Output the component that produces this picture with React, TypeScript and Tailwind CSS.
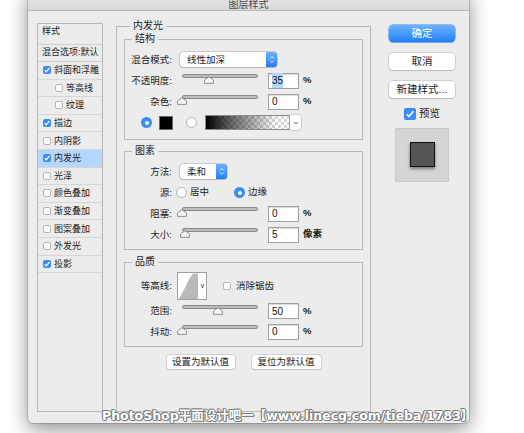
import React from 'react';

type Item = { label: string; on?: boolean; sub?: boolean; active?: boolean };

const items: Item[] = [
  { label: '斜面和浮雕', on: true },
  { label: '等高线', sub: true },
  { label: '纹理', sub: true },
  { label: '描边', on: true },
  { label: '内阴影' },
  { label: '内发光', on: true, active: true },
  { label: '光泽' },
  { label: '颜色叠加' },
  { label: '渐变叠加' },
  { label: '图案叠加' },
  { label: '外发光' },
  { label: '投影', on: true },
];

function Check({ on }: { on?: boolean }) {
  if (on) {
    return (
      <span className="flex h-[8px] w-[8px] shrink-0 items-center justify-center rounded-[2px] bg-[#3a8cf6]">
        <svg viewBox="0 0 8 8" className="h-[8px] w-[8px]">
          <path d="M1.7 4.1 3.3 5.8 6.4 2" fill="none" stroke="#fff" strokeWidth="1.2" />
        </svg>
      </span>
    );
  }
  return <span className="h-[8px] w-[8px] shrink-0 rounded-[2px] border border-[#b4b4b4] bg-white" />;
}

function Radio({ on }: { on?: boolean }) {
  if (on) {
    return (
      <span className="flex h-[11px] w-[11px] shrink-0 items-center justify-center rounded-full bg-[#3a8cf6]">
        <span className="h-[4px] w-[4px] rounded-full bg-white" />
      </span>
    );
  }
  return <span className="h-[11px] w-[11px] shrink-0 rounded-full border border-[#b0b0b0] bg-white" />;
}

function Label({ children }: { children: React.ReactNode }) {
  return <span className="w-[47px] shrink-0 text-right text-[9.5px] leading-[12px]">{children}</span>;
}

function Slider({ value }: { value: number }) {
  return (
    <div className="mb-[3px] ml-[5px] flex w-[86px] shrink-0 flex-col">
      <div className="mx-[5px] h-[4px] rounded-full border border-[#8a8a8a] bg-[#bcbcbc]" />
      <svg className="-mt-[2px] h-[8px] w-[10px]" style={{ marginLeft: value * 0.76 }} viewBox="0 0 10 8">
        <path
          d="M0.6 7.4V3.9L5 0.7 9.4 3.9V7.4Z"
          fill="#f6f6f6"
          stroke="#777"
          strokeWidth="0.8"
          strokeLinejoin="round"
        />
      </svg>
    </div>
  );
}

function Field({ v, sel }: { v: string; sel?: boolean }) {
  return (
    <div className="ml-[5px] flex h-[16px] w-[31px] shrink-0 items-center border border-[#a0a0a0] bg-white pl-[3px] text-[10px] text-[#111] shadow-[inset_0_1px_1px_rgba(0,0,0,0.15)]">
      {sel ? <span className="bg-[#b3d7ff]">{v}</span> : v}
    </div>
  );
}

function Unit({ children }: { children: React.ReactNode }) {
  return <span className="ml-[4px] text-[9.5px] font-bold">{children}</span>;
}

function Select({ text, w }: { text: string; w: string }) {
  return (
    <div
      className={`ml-[8px] flex h-[15px] shrink-0 items-center rounded-[3px] bg-white shadow-[0_0_0_0.5px_#a8a8a8,0_1px_1px_rgba(0,0,0,0.18)] ${w}`}
    >
      <span className="flex-1 pl-[7px] text-[9.5px] leading-[12px]">{text}</span>
      <span className="flex h-full w-[11px] items-center justify-center rounded-r-[3px] bg-gradient-to-b from-[#6ab1fb] to-[#1c7ef5]">
        <svg viewBox="0 0 7 10" className="h-[9px] w-[6px]">
          <path d="M1.3 3.8 3.5 1.6 5.7 3.8M1.3 6.2 3.5 8.4 5.7 6.2" fill="none" stroke="#fff" strokeWidth="1" />
        </svg>
      </span>
    </div>
  );
}

function Group({ title, h, children }: { title: string; h: string; children: React.ReactNode }) {
  return (
    <fieldset className={`ml-[7px] w-[239px] border border-[#b8b8b8] ${h}`}>
      <legend className="ml-[7px] px-[3px] text-[10px] leading-[12px]">{title}</legend>
      {children}
    </fieldset>
  );
}

function SideButton({ children, primary }: { children: React.ReactNode; primary?: boolean }) {
  if (primary) {
    return (
      <div className="flex h-[17px] w-[66px] items-center justify-center rounded-[4px] bg-gradient-to-b from-[#6cb2fb] to-[#1b7ff6] text-[10.5px] text-white shadow-[0_0_0_0.5px_#3a86e6,0_1px_1px_rgba(0,0,0,0.15)]">
        {children}
      </div>
    );
  }
  return (
    <div className="flex h-[17px] w-[66px] items-center justify-center rounded-[4px] bg-white text-[10.5px] shadow-[0_0_0_0.5px_#b4b4b4,0_1px_1px_rgba(0,0,0,0.18)]">
      {children}
    </div>
  );
}

export default function App() {
  return (
    <div className="relative h-[433px] w-[524px] overflow-hidden bg-white pl-[28px] text-[#1c1c1c] [font-family:'Liberation_Sans','Noto_Sans_CJK_SC',sans-serif]">
      <div className="-mt-[11px] flex h-[434px] w-[441px] flex-col rounded-[5px] bg-[#ececec] shadow-[0_0_0_1px_rgba(0,0,0,0.14),0_6px_20px_rgba(0,0,0,0.45)]">
        <div className="flex h-[22px] shrink-0 items-end justify-center rounded-t-[5px] border-b border-[#b8b8b8] bg-gradient-to-b from-[#e9e9e9] to-[#d9d9d9] text-[10px] leading-[11px] text-[#4a4a4a]">
          图层样式
        </div>

        <div className="flex flex-1 items-start pl-[9px]">
          {/* style list */}
          <div className="mt-[12px] flex h-[389px] w-[66px] flex-col border border-[#b6b6b6] text-[9px] leading-[12px]">
            <div className="h-[21px] border-b border-[#cfcfcf] pl-[4px] pt-[1px]">样式</div>
            <div className="h-[17px] whitespace-nowrap border-b border-[#cfcfcf] pl-[4px] pt-[1px]">混合选项:默认</div>
            {items.map((it) => (
              <div
                key={it.label}
                className={`flex h-[17.6px] items-center whitespace-nowrap border-b border-[#d6d6d6] ${it.sub ? 'pl-[17px]' : 'pl-[5px]'} ${it.active ? 'bg-[#b5d6fd]' : ''}`}
              >
                <Check on={it.on} />
                <span className="ml-[3px]">{it.label}</span>
              </div>
            ))}
          </div>

          {/* settings */}
          <fieldset className="ml-[13px] mt-[9px] h-[392px] w-[255px] border border-[#b8b8b8]">
            <legend className="ml-[13px] px-[3px] text-[10px] leading-[12px]">内发光</legend>

            <div className="mt-[1px]">
              <Group title="结构" h="h-[107px]">
                <div className="pt-[4px]">
                  <div className="flex h-[21px] items-center">
                    <Label>混合模式:</Label>
                    <Select text="线性加深" w="w-[97px]" />
                  </div>
                  <div className="flex h-[21px] items-center">
                    <Label>不透明度:</Label>
                    <Slider value={35} />
                    <Field v="35" sel />
                    <Unit>%</Unit>
                  </div>
                  <div className="flex h-[21px] items-center">
                    <Label>杂色:</Label>
                    <Slider value={0} />
                    <Field v="0" />
                    <Unit>%</Unit>
                  </div>
                  <div className="flex h-[21px] items-center pl-[16px]">
                    <Radio on />
                    <span className="ml-[7px] h-[14px] w-[14px] border border-[#666] bg-black" />
                    <span className="ml-[13px] flex">
                      <Radio />
                    </span>
                    <div className="ml-[8px] flex h-[15px] w-[85px] border border-[#8a8a8a] bg-[conic-gradient(#d6d6d6_25%,#fff_0_50%,#d6d6d6_0_75%,#fff_0)] bg-[length:6px_6px]">
                      <div className="h-full w-full bg-[linear-gradient(to_right,#000,rgba(0,0,0,0.6)_30%,rgba(0,0,0,0)_85%)]" />
                    </div>
                    <span className="flex h-[15px] w-[11px] items-center justify-center rounded-r-[3px] bg-white shadow-[0_0_0_0.5px_#b0b0b0]">
                      <svg viewBox="0 0 7 5" className="h-[4px] w-[6px]">
                        <path d="M1 1 3.5 3.6 6 1" fill="none" stroke="#333" strokeWidth="1" />
                      </svg>
                    </span>
                  </div>
                </div>
              </Group>
            </div>

            <div className="mt-[5px]">
              <Group title="图素" h="h-[105px]">
                <div className="pt-[4px]">
                  <div className="flex h-[21px] items-center">
                    <Label>方法:</Label>
                    <Select text="柔和" w="w-[47px]" />
                  </div>
                  <div className="flex h-[21px] items-center text-[9.5px]">
                    <Label>源:</Label>
                    <span className="ml-[4px] flex">
                      <Radio />
                    </span>
                    <span className="ml-[3px]">居中</span>
                    <span className="ml-[25px] flex">
                      <Radio on />
                    </span>
                    <span className="ml-[3px]">边缘</span>
                  </div>
                  <div className="flex h-[21px] items-center">
                    <Label>阻塞:</Label>
                    <Slider value={0} />
                    <Field v="0" />
                    <Unit>%</Unit>
                  </div>
                  <div className="flex h-[21px] items-center">
                    <Label>大小:</Label>
                    <Slider value={4} />
                    <Field v="5" />
                    <Unit>像素</Unit>
                  </div>
                </div>
              </Group>
            </div>

            <div className="mt-[6px]">
              <Group title="品质" h="h-[91px]">
                <div className="pt-[3px]">
                  <div className="flex h-[30px] items-center">
                    <Label>等高线:</Label>
                    <div className="ml-[5px] flex h-[28px] w-[30px] border border-[#a0a0a0] bg-white">
                      <svg viewBox="0 0 21 26" className="h-[26px] w-[21px]">
                        <path d="M0.5 26 C6 19 9 8 15 0.5 L20 0.5 L20 26 Z" fill="#b9b9b9" />
                      </svg>
                      <span className="flex flex-1 items-center justify-center text-[7px] leading-[8px]">v</span>
                    </div>
                    <span className="ml-[16px] flex">
                      <Check />
                    </span>
                    <span className="ml-[5px] text-[9.5px]">消除锯齿</span>
                  </div>
                  <div className="flex h-[20px] items-center">
                    <Label>范围:</Label>
                    <Slider value={48} />
                    <Field v="50" />
                    <Unit>%</Unit>
                  </div>
                  <div className="flex h-[21px] items-center">
                    <Label>抖动:</Label>
                    <Slider value={0} />
                    <Field v="0" />
                    <Unit>%</Unit>
                  </div>
                </div>
              </Group>
            </div>

            <div className="mt-[8px] flex justify-center gap-[17px] text-[9.5px]">
              <div className="flex h-[14px] w-[68px] items-center justify-center rounded-[3px] bg-white shadow-[0_0_0_0.5px_#b8b8b8,0_1px_1px_rgba(0,0,0,0.15)]">
                设置为默认值
              </div>
              <div className="flex h-[14px] w-[69px] items-center justify-center rounded-[3px] bg-white shadow-[0_0_0_0.5px_#b8b8b8,0_1px_1px_rgba(0,0,0,0.15)]">
                复位为默认值
              </div>
            </div>
          </fieldset>

          {/* actions */}
          <div className="ml-[18px] mt-[14px] flex w-[66px] flex-col items-center">
            <SideButton primary>确定</SideButton>
            <div className="mt-[11px]">
              <SideButton>取消</SideButton>
            </div>
            <div className="mt-[11px]">
              <SideButton>新建样式...</SideButton>
            </div>
            <div className="mt-[8px] flex items-center">
              <span className="flex h-[12px] w-[12px] items-center justify-center rounded-[2px] bg-[#3a8cf6]">
                <svg viewBox="0 0 12 12" className="h-[12px] w-[12px]">
                  <path d="M2.8 6.2 5 8.5 9.3 3.2" fill="none" stroke="#fff" strokeWidth="1.5" />
                </svg>
              </span>
              <span className="ml-[3px] text-[10.5px]">预览</span>
            </div>
            <div className="mt-[6px] flex h-[54px] w-[54px] items-center justify-center border border-[#c9c9c9] bg-[#d5d5d5]">
              <div className="h-[25px] w-[25px] border border-[#111] bg-[#555] shadow-[0_2px_3px_rgba(0,0,0,0.45)]" />
            </div>
          </div>
        </div>
      </div>

      <div className="absolute left-[102px] top-[409px] whitespace-nowrap text-[12.5px] font-bold leading-[14px] text-white [font-family:'DejaVu_Sans','Noto_Sans_CJK_SC',sans-serif] [text-shadow:1px_0_#7a7a7a,-1px_0_#7a7a7a,0_1px_#7a7a7a,0_-1px_#7a7a7a,1px_1px_#8a8a8a,-1px_-1px_#8a8a8a]">
        PhotoShop平面设计吧一【www.linecg.com/tieba/1783】
      </div>
    </div>
  );
}
